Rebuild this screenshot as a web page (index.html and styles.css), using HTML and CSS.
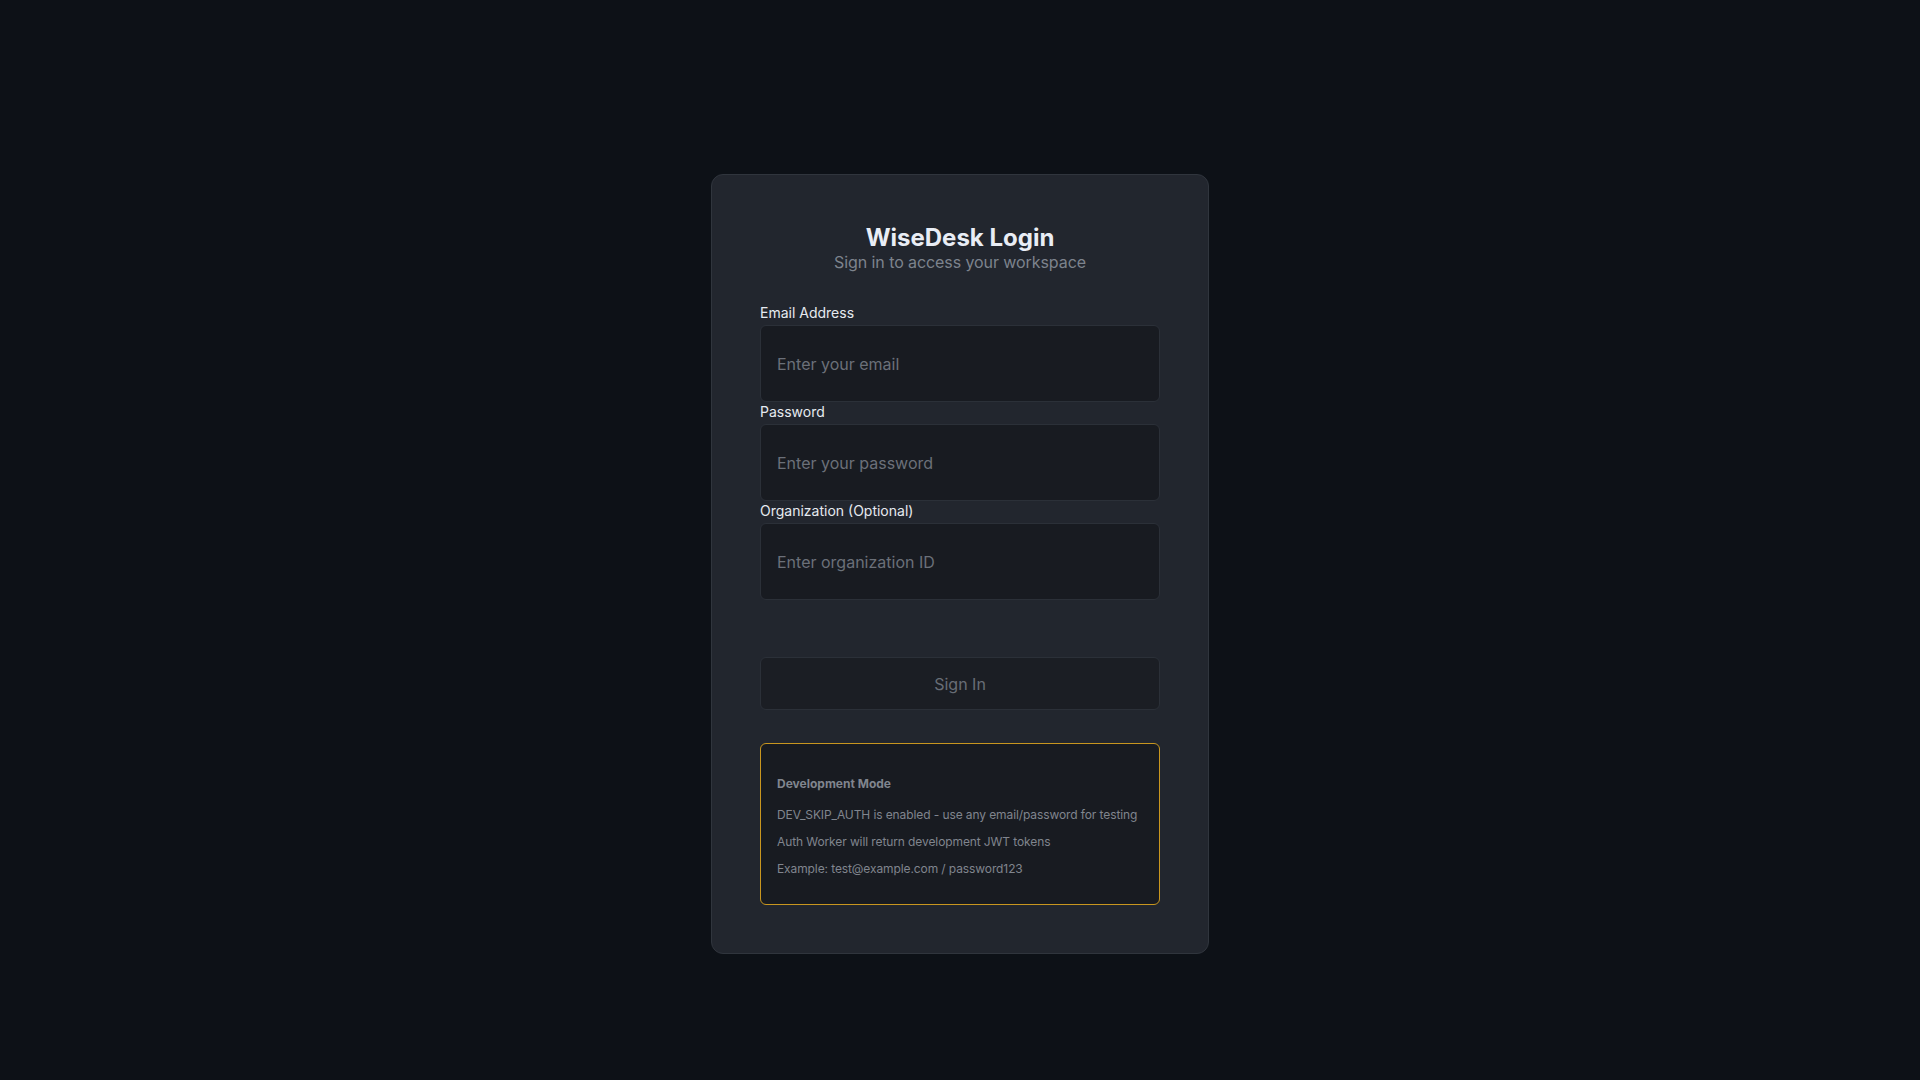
FILE: index.html
```html
<!DOCTYPE html>
<html lang="en">
<head>
<meta charset="utf-8">
<title>WiseDesk Login</title>
<link rel="stylesheet" href="styles.css">
</head>
<body>
<main class="page">
  <section class="card">
    <header class="card-header">
      <h1 class="title">WiseDesk Login</h1>
      <p class="subtitle">Sign in to access your workspace</p>
    </header>
    <form class="form">
      <div class="field">
        <label class="label" for="email">Email Address</label>
        <input class="input" id="email" type="email" placeholder="Enter your email">
      </div>
      <div class="field">
        <label class="label" for="password">Password</label>
        <input class="input" id="password" type="password" placeholder="Enter your password">
      </div>
      <div class="field">
        <label class="label" for="org">Organization (Optional)</label>
        <input class="input" id="org" type="text" placeholder="Enter organization ID">
      </div>
      <button class="btn" type="button">Sign In</button>
    </form>
    <div class="dev-box">
      <h4 class="dev-title">Development Mode</h4>
      <p class="dev-text">DEV_SKIP_AUTH is enabled - use any email/password for testing</p>
      <p class="dev-text">Auth Worker will return development JWT tokens</p>
      <p class="dev-text">Example: test@example.com / password123</p>
    </div>
  </section>
</main>
</body>
</html>
```
FILE: styles.css
```css
* { box-sizing: border-box; }
html, body {
  margin: 0;
  padding: 0;
  height: 100%;
}
body {
  background: #0d1117;
  font-family: Inter, "Noto Sans", sans-serif;
  color: #e6edf3;
}
.page {
  min-height: 100vh;
  display: flex;
  justify-content: center;
  align-items: flex-start;
  padding-top: 174px;
}
.card {
  width: 498px;
  background: #22262e;
  border: 1px solid #30353d;
  border-radius: 12px;
  padding: 48px;
}
.card-header {
  text-align: center;
  margin-bottom: 32px;
}
.title {
  margin: 0;
  font-size: 24px;
  font-weight: 700;
  line-height: normal;
  color: #e9edf5;
}
.subtitle {
  margin: 0;
  font-size: 16px;
  line-height: normal;
  letter-spacing: -0.08px;
  color: #7d838d;
}
.form {
  display: flex;
  flex-direction: column;
}
.field {
  display: flex;
  flex-direction: column;
  margin-bottom: 1px;
}
.label {
  font-size: 14px;
  line-height: 17px;
  font-weight: 400;
  color: #e6eaf0;
  margin-bottom: 4px;
}
.input {
  height: 77px;
  padding: 0 16px;
  background: #181b21;
  border: 1px solid #2b3038;
  border-radius: 6px;
  color: #e6edf3;
  font-family: inherit;
  font-size: 16px;
  outline: none;
}
.input::placeholder {
  color: #6b7079;
}
.btn {
  margin-top: 56px;
  height: 53px;
  background: #1b1e24;
  border: 1px solid #2b3038;
  border-radius: 6px;
  color: #686d76;
  font-family: inherit;
  font-size: 16px;
}
.dev-box {
  margin-top: 33px;
  background: #181b21;
  border: 1px solid #c8961f;
  border-radius: 6px;
  padding: 16px;
}
.dev-title {
  margin: 16px 0;
  font-size: 12px;
  font-weight: 700;
  line-height: normal;
  color: #80858e;
}
.dev-text {
  margin: 12px 0;
  font-size: 12px;
  line-height: 15px;
  letter-spacing: -0.1px;
  white-space: nowrap;
  color: #80858e;
}
```
